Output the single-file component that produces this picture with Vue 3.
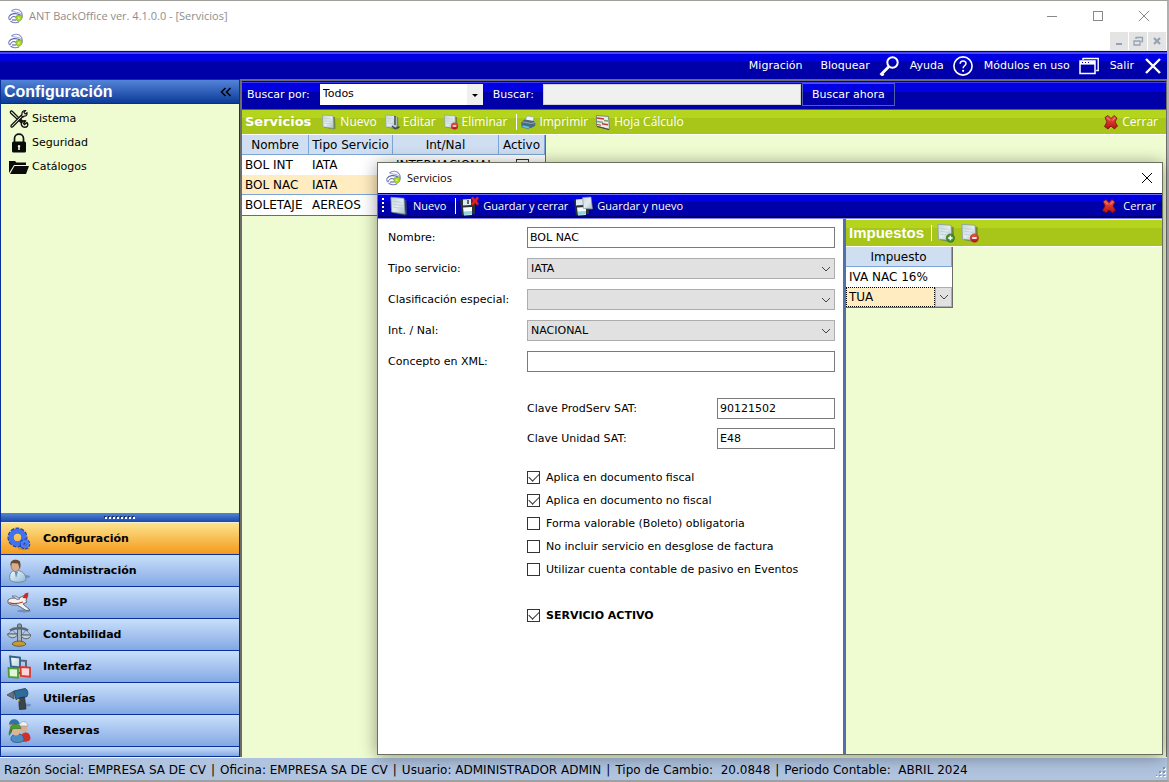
<template>
  <div class="window">
    <svg class="defs" aria-hidden="true">
      <defs>
        <linearGradient id="gPage" x1="0" y1="0" x2="1" y2="1">
          <stop offset="0" stop-color="#c3d3da" />
          <stop offset="0.5" stop-color="#e3ecef" />
          <stop offset="1" stop-color="#a9bcc6" />
        </linearGradient>
        <linearGradient id="gRed" x1="0" y1="0" x2="0" y2="1">
          <stop offset="0" stop-color="#f25a4a" />
          <stop offset="1" stop-color="#b80f0f" />
        </linearGradient>
        <linearGradient id="gShirt" x1="0" y1="0" x2="1" y2="1">
          <stop offset="0" stop-color="#f4fbff" />
          <stop offset="1" stop-color="#8fb9d4" />
        </linearGradient>
        <linearGradient id="gBlueBox" x1="0" y1="0" x2="1" y2="1">
          <stop offset="0" stop-color="#fff" />
          <stop offset="1" stop-color="#b4d0e4" />
        </linearGradient>
      </defs>

      <symbol id="i-logo" viewBox="0 0 16 16">
        <path d="M3.500 3C6 .5 11 .5 13.300 4c1.200 2 1.200 4.500.2 6.500" fill="none" stroke="#8b8fd0" stroke-width="1.100" />
        <path d="M3.500 3C6 4.500 11 3.500 13.500 6.500" fill="none" stroke="#9ea2dc" />
        <path d="M1 8.500C3 5.500 8 4.500 12 7" fill="none" stroke="#5a60b4" stroke-width="1.200" />
        <path d="M1 8.500c-.5 1.500 0 3 1.200 3.600M2.500 13c2 2 6 2 8.500 1" fill="none" stroke="#7c80c8" stroke-width="1.100" />
        <path d="M2.500 11.500c.5-3 4-4 6-1.500M4 12h4.500" fill="none" stroke="#4a4f9e" />
        <path d="M8 8l5.500-1.200c1.300 3 0 6-3 6.700C8.500 12.500 7.500 10.500 8 8z" fill="#a8dc1c" stroke="#6f9c28" stroke-width=".7" />
        <path d="M9.800 9.500h2l-1 2z" fill="#eefbb8" />
      </symbol>

      <symbol id="i-tools" viewBox="0 0 20 20">
        <path d="M2 16.500L12 6.500M3.500 18L14 7.500M2 16.500c-.5 1.500.5 2 1.500 1.500" fill="none" stroke="#111" stroke-width="1.200" />
        <path d="M16.500 1.500c-2.500 0-4 1.500-3.500 4L12 6.500 14 8l1-.8c2 .2 3.500-1.300 3-3.500L16.200 5 15 3.500z" fill="none" stroke="#111" stroke-width="1.200" />
        <path d="M3 2L9.500 8.500M1.500 4L8 10M1.500 4Q1 1.500 3 2" stroke="#111" stroke-width="1.300" fill="none" />
        <path d="M10.500 10.500l3 3" stroke="#111" stroke-width="3.500" />
        <path d="M18 13.500l-2.500 2-1-1 2-2.500c-2.500-1-5 1.500-4 4 .8 2.300 3.500 2.800 5 1.500M18 13.500c1.300 2 .5 4-1 5" fill="none" stroke="#111" stroke-width="1.400" />
      </symbol>
      <symbol id="i-lock" viewBox="0 0 20 20">
        <path d="M5.500 9V5.500a4.500 4.300 0 0 1 9 0V9" fill="none" stroke="#111" stroke-width="1.700" />
        <rect x="3" y="8.500" width="14" height="11" rx="1.500" fill="#0a0a0a" />
        <path d="M10 12a1.300 1.300 0 0 1 .8 2.300V17H9.200v-2.700A1.300 1.300 0 0 1 10 12z" fill="#eefacd" />
      </symbol>
      <symbol id="i-folder" viewBox="0 0 20 20">
        <path d="M0 16V4h6l1.500 1.500H17V8H5z" fill="#0a0a0a" />
        <path d="M5.500 9H20l-3 8H1z" fill="#0a0a0a" />
      </symbol>

      <symbol id="i-page" viewBox="0 0 16 16">
        <path d="M3 13.500l10 2 1.500-1L14 3h-2z" fill="#4c5c50" opacity=".6" />
        <path d="M1.500 1l10.500.8.800 12.600L2 12.800z" fill="url(#gPage)" stroke="#8399a5" stroke-width=".6" />
        <path d="M3.500 4.500l6.500.6M3.500 6.800l7 .6M3.500 9l7 .8" stroke="#b3c6cf" stroke-width=".6" />
      </symbol>
      <symbol id="i-edit" viewBox="0 0 16 16">
        <use href="#i-page" />
        <path d="M11 2v9M8 12l3 2.500 4.500-1.500" fill="none" stroke="#404c50" stroke-width="1.600" />
        <path d="M12.500 3v9" stroke="#a9bcc6" stroke-width="1.200" />
      </symbol>
      <symbol id="i-delete" viewBox="0 0 16 16">
        <use href="#i-page" />
        <circle cx="11.500" cy="12" r="3.300" fill="url(#gRed)" stroke="#b02a2a" stroke-width=".5" />
        <rect x="9.700" y="11.300" width="3.600" height="1.400" fill="#fff" />
      </symbol>
      <symbol id="i-add" viewBox="0 0 16 16">
        <use href="#i-page" />
        <circle cx="11.500" cy="12" r="3.300" fill="#3d9230" stroke="#2b6b22" stroke-width=".5" />
        <path d="M11.500 10.200v3.600M9.700 12h3.600" stroke="#fff" stroke-width="1.200" />
      </symbol>
      <symbol id="i-print" viewBox="0 0 16 16">
        <path d="M5 7l2-5 7 1-1 5z" fill="#eef3f6" stroke="#8fa0a8" stroke-width=".6" />
        <path d="M1 7.500l4-2 9 1.500 1.500 2-.5 3-4 2-9.500-2z" fill="#4b6a80" />
        <path d="M1 7.500l10 2 4.500-1" fill="none" stroke="#9db9c9" stroke-width=".8" />
        <path d="M3 11l7 1.500-1.500 2.500-7-2z" fill="#5ec5ea" stroke="#2d5c78" stroke-width=".5" />
      </symbol>
      <symbol id="i-sheet" viewBox="0 0 16 16">
        <path d="M1.500 1.500l12 1 1 13L1.500 12z" fill="#e9edea" stroke="#697369" stroke-width=".8" />
        <path d="M2 4l7 1M7 9.800l6 1" stroke="#c03a34" stroke-width="1.400" />
        <path d="M2 7.500l6 .8M9 6.500l4 .5" stroke="#76a06a" stroke-width="1.300" />
        <path d="M2 10.500l4 .7" stroke="#c03a34" stroke-width="1" />
        <path d="M2 12.500l12 3" stroke="#444c40" stroke-width="1.200" />
      </symbol>
      <symbol id="i-close" viewBox="0 0 16 16">
        <path d="M2 3.500L5 1.500 8 4.500l3-3L14 4l-2 4 2.500 4-3 3L8 12l-3 3-3.500-2.500L4 8z" fill="url(#gRed)" stroke="#6e0c0c" stroke-width=".8" stroke-linejoin="round" />
        <path d="M4 3.500l3 3M12 3.500L9.500 6.500" stroke="#ff9a88" stroke-width=".8" />
      </symbol>
      <symbol id="i-save-close" viewBox="0 0 20 20">
        <path d="M1 3.500l10-1 5 3V18l-13 1.500z" fill="#2a3238" />
        <path d="M4 3.500l8-.5v6L4 9.500z" fill="#dfe9ee" />
        <path d="M8 4h2v4H8z" fill="#56646c" />
        <path d="M4 11.500l9-.5v8l-8 .5z" fill="#f6fbfc" />
        <path d="M5 15.500l8-.5v3.500l-8 .5z" fill="#8fd6dc" />
        <path d="M12 2l2-1.500L16 3l2-2.500L20 2l-2 3 2 3-2 1.500L16 7l-2 2.500L12 8l2-3z" fill="#e0201c" />
      </symbol>
      <symbol id="i-save-new" viewBox="0 0 20 20">
        <path d="M1 3.500l10-1 5 3V18l-13 1.500z" fill="#2a3238" />
        <path d="M3 3.500l7-.5v6L3 9.500z" fill="#dfe9ee" />
        <path d="M4 11.500l9-.5v8l-8 .5z" fill="#f6fbfc" />
        <path d="M5 15.500l8-.5v3.500l-8 .5z" fill="#8fd6dc" />
        <path d="M9.500 1.500l8.500-.5 1.500 12-9-.5z" fill="url(#gPage)" stroke="#7d8f98" stroke-width=".6" />
      </symbol>

      <symbol id="i-key" viewBox="0 0 20 20">
        <circle cx="13.500" cy="6.500" r="5.200" fill="none" stroke="#fff" stroke-width="2" />
        <path d="M10 10.500L1.500 19M2 17l2.500 2.500" fill="none" stroke="#fff" stroke-width="2.800" />
      </symbol>
      <symbol id="i-help" viewBox="0 0 20 20">
        <circle cx="10" cy="10" r="9.100" fill="none" stroke="#fff" stroke-width="1.600" />
        <path d="M7.200 7.800c0-3.800 5.800-3.600 5.800-.3 0 2.200-2.900 2.300-2.900 4.700" fill="none" stroke="#fff" stroke-width="1.500" />
        <circle cx="10.100" cy="14.800" r="1.100" fill="#fff" />
      </symbol>
      <symbol id="i-windows" viewBox="0 0 20 20">
        <path d="M4 4V2.500h15.200V14.500h-2" fill="none" stroke="#fff" stroke-width="1.400" />
        <rect x="1" y="5" width="15" height="12.500" fill="none" stroke="#fff" stroke-width="1.500" />
        <path d="M1 6.800h15" stroke="#fff" stroke-width="3.600" />
        <path d="M3 6.500h1M6 6.500h1M9 6.500h1" stroke="#0000a8" />
      </symbol>
      <symbol id="i-exit" viewBox="0 0 20 20">
        <path d="M3 3l14 14M17 3L3 17" stroke="#fff" stroke-width="2.400" />
      </symbol>

      <symbol id="i-gears" viewBox="0 0 24 24">
        <ellipse cx="17" cy="21.500" rx="6" ry="1.500" fill="#7a6030" opacity=".4" />
        <circle cx="10.500" cy="10.500" r="7" fill="none" stroke="#1c3fae" stroke-width="6" stroke-dasharray="3 .9" />
        <circle cx="10.500" cy="10.500" r="6.500" fill="none" stroke="#3f72ee" stroke-width="5" />
        <circle cx="18" cy="17" r="3" fill="none" stroke="#1c3fae" stroke-width="4.600" stroke-dasharray="2 .6" />
        <circle cx="18" cy="17" r="3" fill="none" stroke="#4a7cf2" stroke-width="2.800" />
      </symbol>
      <symbol id="i-person" viewBox="0 0 24 24">
        <ellipse cx="18" cy="17.500" rx="5" ry="1.500" fill="#4b6a98" opacity=".5" />
        <path d="M3 21c-1-6 1-9.500 6-9.500 6 0 10 3 10 9.500-3 3-13 3-16 0z" fill="url(#gShirt)" stroke="#5d7f96" stroke-width=".8" />
        <path d="M7.500 12l1.500 7 2-6z" fill="#5f94b8" />
        <ellipse cx="8.500" cy="7" rx="4.300" ry="5.500" fill="#d9ad8c" stroke="#7a5a44" stroke-width=".6" />
        <path d="M3.500 7C2.500 0 9-.5 12.500 2c1.500 2 1 5 .5 8L11 4.500 5 4z" fill="#6a4a34" />
      </symbol>
      <symbol id="i-plane" viewBox="0 0 24 24">
        <ellipse cx="17" cy="20" rx="7" ry="1.500" fill="#4b6a98" opacity=".5" />
        <path d="M1 9c3-2.500 7-2 10-1.500L18 4l3-.5-2 6 1 1.500-4 2 7 6-4 .5-9-5.500c-4 .5-7 0-9-2z" fill="#f0f2f4" stroke="#5f686e" stroke-width="1" />
        <path d="M5 5l4 0 4 3-3 .5z" fill="#c9d0d4" stroke="#5f686e" stroke-width=".7" />
        <path d="M15.500 7l2.500-4.500 3.500-1-1.500 6z" fill="#d82420" />
        <path d="M2 11.500c4 2 8 1.500 14-.5" fill="none" stroke="#c8322c" stroke-width="1.200" />
      </symbol>
      <symbol id="i-scale" viewBox="0 0 24 24">
        <path d="M10.500 3h4v17h-4z" fill="#a8b4bc" stroke="#4c565c" stroke-width=".9" />
        <circle cx="12.500" cy="3" r="2.200" fill="#8b979e" stroke="#4c565c" stroke-width=".9" />
        <path d="M3 7.500c4-3 14-3 18 0" fill="none" stroke="#5d686f" stroke-width="2.400" />
        <path d="M5 7l-4 4h9zM19 7l-4 5h9z" fill="none" stroke="#69757c" stroke-width=".7" />
        <path d="M.5 11h10c-1 5-9 5-10 0zM14 12h10c-1 5-9 5-10 0z" fill="#c4ced3" stroke="#4c565c" stroke-width=".9" />
        <path d="M5 21c2-4 12-4 14 0-2 3-12 3-14 0z" fill="#c99a34" stroke="#5c4a20" stroke-width=".8" />
      </symbol>
      <symbol id="i-boxes" viewBox="0 0 24 24">
        <path d="M13 5.500l6 .5v7M6 12v4M11 18h4" fill="none" stroke="#586878" stroke-width="2" />
        <path d="M3 1.500l10 1v10l-9-1z" fill="url(#gBlueBox)" stroke="#2f628c" stroke-width="1.800" />
        <path d="M1.500 13l9.500.7v9l-9-.7z" fill="#e4f4dc" stroke="#4d9c32" stroke-width="1.800" />
        <path d="M13.500 12l9.500.7v9l-9-.7z" fill="#fbd8d4" stroke="#d83838" stroke-width="1.800" />
      </symbol>
      <symbol id="i-drill" viewBox="0 0 24 24">
        <ellipse cx="19" cy="18" rx="5" ry="1.500" fill="#4b6a98" opacity=".5" />
        <path d="M0 8l7-4v8z" fill="#68727a" stroke="#3a4248" stroke-width=".7" />
        <path d="M7 4L18 1.500c3 1 3.500 5 2 8L9 12.500z" fill="#2f6c9c" stroke="#24435c" stroke-width=".9" />
        <path d="M12 11l5.500-1 1 8 .5 4-6.500.5-.5-5z" fill="#3a444c" stroke="#20282e" stroke-width=".7" />
        <path d="M10 12h2.500v2.500L10.500 14z" fill="#d8b040" />
      </symbol>
      <symbol id="i-people" viewBox="0 0 24 24">
        <path d="M13 21c0-9 10-10 10.500-2 .5 4-8 5-10.500 2z" fill="#d0302c" />
        <ellipse cx="16.500" cy="9" rx="4" ry="4.500" fill="#d9ad8c" />
        <path d="M12.500 7c0-6 8-6 8.500 0z" fill="#eef0f2" stroke="#8a9298" stroke-width=".6" />
        <path d="M2 17c-1-5 1-8 5-7z" fill="#3d7c3c" />
        <ellipse cx="7" cy="6" rx="4.500" ry="5" fill="#c99b7c" />
        <path d="M2 5.500c0-7 10-7 10.500-.5z" fill="#2f74a8" />
        <path d="M4 21c-1-8 13-9 13 0-2 3.500-11 3.500-13 0z" fill="#4c8cc0" stroke="#24547c" stroke-width=".7" />
        <ellipse cx="9" cy="12" rx="4" ry="4.500" fill="#e0b492" />
        <path d="M3 11.500c0-8 10-8 11-2L7 9.500z" fill="#46a030" stroke="#2b6b22" stroke-width=".6" />
      </symbol>
    </svg>

    <header class="titlebar">
      <svg class="icon"><use href="#i-logo" /></svg>
      <span class="title">ANT BackOffice ver. 4.1.0.0 - [Servicios]</span>
      <div class="win-buttons">
        <button aria-label="Minimizar"><svg viewBox="0 0 12 12"><path d="M1 6.500h10" /></svg></button>
        <button aria-label="Maximizar"><svg viewBox="0 0 12 12"><rect x="1.500" y="1.500" width="9" height="9" /></svg></button>
        <button aria-label="Cerrar"><svg viewBox="0 0 12 12"><path d="M1 1l10 10M11 1L1 11" /></svg></button>
      </div>
    </header>

    <div class="mdi-bar">
      <svg class="icon"><use href="#i-logo" /></svg>
      <div class="mdi-buttons">
        <button aria-label="Minimizar ventana"><svg viewBox="0 0 12 12"><path d="M3 9h6" stroke-width="2" /></svg></button>
        <button aria-label="Restaurar ventana"><svg viewBox="0 0 12 12"><path d="M4 4V2.500h6.500v4H9M4 2.500h6.500M2 6h6v4H2z" stroke-width="1.300" /></svg></button>
        <button aria-label="Cerrar ventana"><svg viewBox="0 0 12 12"><path d="M3 3l6 6M9 3L3 9" stroke-width="2.200" /></svg></button>
      </div>
    </div>

    <nav class="top-menu">
      <button v-for="item in topMenu" :key="item.label">
        {{ item.label }}
        <svg v-if="item.icon"><use :href="'#' + item.icon" /></svg>
      </button>
    </nav>

    <div class="workspace">
      <aside class="sidebar">
        <div class="sidebar-header">
          <h2>Configuración</h2>
          <button aria-label="Contraer">
            <svg viewBox="0 0 12 10"><path d="M5.500 1l-4 4 4 4M10.500 1l-4 4 4 4" /></svg>
          </button>
        </div>
        <ul class="tree">
          <li v-for="item in treeItems" :key="item.label">
            <a href="#"><svg><use :href="'#' + item.icon" /></svg>{{ item.label }}</a>
          </li>
        </ul>
        <div class="splitter"><i v-for="n in 8" :key="n"></i></div>
        <button
          v-for="item in modules"
          :key="item.label"
          class="module"
          :class="{ active: item.label === activeModule }"
          @click="activeModule = item.label"
        >
          <svg><use :href="'#' + item.icon" /></svg>
          {{ item.label }}
        </button>
        <div class="module-overflow"></div>
      </aside>

      <main class="content">
        <div class="search-bar">
          <label for="buscar-por">Buscar por:</label>
          <div class="search-select">
            <select id="buscar-por" v-model="searchBy">
              <option>Todos</option>
            </select>
            <svg viewBox="0 0 8 5"><path d="M1 1h6L4 4z" /></svg>
          </div>
          <label for="buscar" class="search-label">Buscar:</label>
          <input id="buscar" v-model="searchText" type="text">
          <button>Buscar ahora</button>
        </div>

        <div class="green-bar">
          <h3>Servicios</h3>
          <button class="tool"><svg><use href="#i-page" /></svg>Nuevo</button>
          <button class="tool"><svg><use href="#i-edit" /></svg>Editar</button>
          <button class="tool"><svg><use href="#i-delete" /></svg>Eliminar</button>
          <span class="separator"></span>
          <button class="tool print"><svg><use href="#i-print" /></svg>Imprimir</button>
          <button class="tool"><svg><use href="#i-sheet" /></svg>Hoja Cálculo</button>
          <button class="tool close"><svg><use href="#i-close" /></svg>Cerrar</button>
        </div>

        <table class="grid services">
          <thead>
            <tr><th>Nombre</th><th>Tipo Servicio</th><th>Int/Nal</th><th>Activo</th></tr>
          </thead>
          <tbody>
            <tr v-for="row in services" :key="row.name" :class="{ selected: row.name === form.name }">
              <td>{{ row.name }}</td>
              <td>{{ row.type }}</td>
              <td>{{ row.scope }}</td>
              <td class="check-cell"><input v-model="row.active" type="checkbox" :aria-label="row.name"></td>
            </tr>
          </tbody>
        </table>
      </main>
    </div>

    <footer class="status">
      <span>Razón Social: EMPRESA SA DE CV</span>
      <span>|</span>
      <span>Oficina: EMPRESA SA DE CV</span>
      <span>|</span>
      <span>Usuario: ADMINISTRADOR ADMIN</span>
      <span>|</span>
      <span>Tipo de Cambio:&nbsp; 20.0848</span>
      <span>|</span>
      <span>Periodo Contable:&nbsp; ABRIL 2024</span>
      <svg class="grip" viewBox="0 0 10 10">
        <path d="M8 1h2v2H8zM4 5h2v2H4zM8 5h2v2H8zM0 9h2v1H0zM4 9h2v1H4zM8 9h2v1H8z" fill="#fff" />
        <path d="M7 0h2v2H7zM3 4h2v2H3zM7 4h2v2H7zM0 8h1v1H0zM3 8h2v1H3zM7 8h2v1H7z" fill="#8c9099" />
      </svg>
    </footer>

    <section class="dialog" role="dialog" aria-labelledby="dialog-title">
      <div class="dialog-title">
        <svg class="icon"><use href="#i-logo" /></svg>
        <span id="dialog-title">Servicios</span>
        <button aria-label="Cerrar"><svg viewBox="0 0 12 12"><path d="M1 1l10 10M11 1L1 11" /></svg></button>
      </div>

      <div class="dialog-bar">
        <span class="handle"></span>
        <button class="tool"><svg><use href="#i-page" /></svg>Nuevo</button>
        <span class="separator"></span>
        <button class="tool save"><svg><use href="#i-save-close" /></svg>Guardar y cerrar</button>
        <button class="tool"><svg><use href="#i-save-new" /></svg>Guardar y nuevo</button>
        <button class="tool close"><svg><use href="#i-close" /></svg>Cerrar</button>
      </div>

      <div class="dialog-body">
        <form class="form" @submit.prevent>
          <div class="fields">
            <label for="nombre">Nombre:</label>
            <input id="nombre" v-model="form.name" type="text">

            <template v-for="field in selects" :key="field.id">
              <label :for="field.id">{{ field.label }}</label>
              <div class="select">
                <select :id="field.id" v-model="field.value">
                  <option>{{ field.value }}</option>
                </select>
                <svg viewBox="0 0 10 6"><path d="M1 1l4 4 4-4" /></svg>
              </div>
            </template>

            <label for="concepto">Concepto en XML:</label>
            <input id="concepto" v-model="form.concept" type="text">
          </div>

          <div class="sat">
            <label for="prodserv">Clave ProdServ SAT:</label>
            <input id="prodserv" v-model="form.productKey" type="text">
            <label for="unidad">Clave Unidad SAT:</label>
            <input id="unidad" v-model="form.unitKey" type="text">
          </div>

          <div class="options">
            <label v-for="option in options" :key="option.label">
              <input v-model="option.checked" type="checkbox">{{ option.label }}
            </label>
          </div>

          <label class="active-service">
            <input v-model="form.active" type="checkbox">SERVICIO ACTIVO
          </label>
        </form>

        <div class="taxes">
          <div class="green-bar taxes-bar">
            <h3>Impuestos</h3>
            <span class="separator"></span>
            <button class="tool" aria-label="Agregar impuesto"><svg><use href="#i-add" /></svg></button>
            <button class="tool" aria-label="Quitar impuesto"><svg><use href="#i-delete" /></svg></button>
          </div>
          <table class="grid tax-grid">
            <thead>
              <tr><th>Impuesto</th></tr>
            </thead>
            <tbody>
              <tr><td>IVA NAC 16%</td></tr>
              <tr>
                <td class="tax-cell">
                  <div class="tax-select">
                    <select v-model="tax" aria-label="Impuesto">
                      <option>TUA</option>
                    </select>
                    <span class="arrow"><svg viewBox="0 0 10 6"><path d="M1 1l4 4 4-4" /></svg></span>
                  </div>
                </td>
              </tr>
            </tbody>
          </table>
        </div>
      </div>
    </section>
  </div>
</template>

<script setup>
import { reactive, ref } from 'vue'

const topMenu = [
  { label: 'Migración' },
  { label: 'Bloquear', icon: 'i-key' },
  { label: 'Ayuda', icon: 'i-help' },
  { label: 'Módulos en uso', icon: 'i-windows' },
  { label: 'Salir', icon: 'i-exit' }
]

const treeItems = [
  { label: 'Sistema', icon: 'i-tools' },
  { label: 'Seguridad', icon: 'i-lock' },
  { label: 'Catálogos', icon: 'i-folder' }
]

const modules = [
  { label: 'Configuración', icon: 'i-gears' },
  { label: 'Administración', icon: 'i-person' },
  { label: 'BSP', icon: 'i-plane' },
  { label: 'Contabilidad', icon: 'i-scale' },
  { label: 'Interfaz', icon: 'i-boxes' },
  { label: 'Utilerías', icon: 'i-drill' },
  { label: 'Reservas', icon: 'i-people' }
]
const activeModule = ref('Configuración')

const searchBy = ref('Todos')
const searchText = ref('')
const tax = ref('TUA')

const services = reactive([
  { name: 'BOL INT', type: 'IATA', scope: 'INTERNACIONAL', active: true },
  { name: 'BOL NAC', type: 'IATA', scope: '', active: true },
  { name: 'BOLETAJE', type: 'AEREOS', scope: '', active: true }
])

const form = reactive({
  name: 'BOL NAC',
  concept: '',
  productKey: '90121502',
  unitKey: 'E48',
  active: true
})

const selects = reactive([
  { id: 'tipo', label: 'Tipo servicio:', value: 'IATA' },
  { id: 'clasificacion', label: 'Clasificación especial:', value: '' },
  { id: 'int-nal', label: 'Int. / Nal:', value: 'NACIONAL' }
])

const options = reactive([
  { label: 'Aplica en documento fiscal', checked: true },
  { label: 'Aplica en documento no fiscal', checked: true },
  { label: 'Forma valorable (Boleto) obligatoria', checked: false },
  { label: 'No incluir servicio en desglose de factura', checked: false },
  { label: 'Utilizar cuenta contable de pasivo en Eventos', checked: false }
])
</script>

<style>
body {
  background: #c4c4c4;
}
</style>

<style scoped>
* {
  box-sizing: border-box;
}

.window {
  position: relative;
  display: flex;
  flex-direction: column;
  min-height: 100vh;
  border-top: 1px solid #a0a09a;
  border-right: 2px solid #b0b0b0;
  border-bottom: 2px solid #a0a0a0;
  background: #fff;
  color: #000;
  font: 11px/14px "DejaVu Sans", sans-serif;
}

.defs {
  position: absolute;
  width: 0;
  height: 0;
}

button,
input,
select {
  margin: 0;
  padding: 0;
  border: 0;
  border-radius: 0;
  background: none;
  color: inherit;
  font: inherit;
  white-space: nowrap;
}

select {
  appearance: none;
}

svg {
  flex: none;
}

h2,
h3 {
  margin: 0;
}

.icon {
  width: 16px;
  height: 16px;
}

.titlebar {
  display: flex;
  align-items: center;
  height: 30px;
  padding-left: 8px;
  color: #8e8e8e;
}

.title {
  margin-left: 5px;
  font: 11px/14px "Open Sans", sans-serif;
}

.win-buttons {
  display: flex;
  margin-left: auto;
}

.win-buttons button {
  width: 46px;
  height: 30px;
}

.win-buttons svg {
  width: 12px;
  height: 12px;
  vertical-align: middle;
  fill: none;
  stroke: #888;
}

.mdi-bar {
  display: flex;
  align-items: center;
  height: 20px;
  padding: 0 1px 0 8px;
  border-bottom: 1px solid #e8e8e8;
}

.mdi-buttons {
  display: flex;
  gap: 1px;
  margin-left: auto;
}

.mdi-buttons button {
  width: 18px;
  height: 18px;
  background: #e4e4e4;
}

.mdi-buttons svg {
  width: 12px;
  height: 12px;
  vertical-align: middle;
  fill: none;
  stroke: #94a3b3;
}

.top-menu {
  display: flex;
  justify-content: flex-end;
  align-items: center;
  gap: 11px;
  height: 28px;
  padding-right: 4px;
  border-top: 1px solid #000088;
  background: linear-gradient(#4848f0 0 2px, #0000e0 2px 9px, #0000a8 9px);
  color: #fff;
}

.top-menu button {
  display: flex;
  align-items: center;
  gap: 9px;
}

.top-menu button:first-child {
  margin-right: 7px;
}

.top-menu svg {
  width: 20px;
  height: 20px;
}

.workspace {
  display: flex;
  flex: 1;
}

.sidebar {
  display: flex;
  flex-direction: column;
  width: 240px;
  border: 1px solid #0a2f98;
  background: #effbd0;
}

.sidebar-header {
  display: flex;
  justify-content: space-between;
  align-items: center;
  height: 24px;
  padding: 1px 7px 0 3px;
  border-bottom: 1px solid #0a2f78;
  background: linear-gradient(#5384d8, #0c3b98);
}

.sidebar-header h2 {
  color: #fff;
  font: bold 16px/20px "Liberation Sans", sans-serif;
}

.sidebar-header svg {
  display: block;
  width: 12px;
  height: 10px;
  fill: none;
  stroke: #000;
  stroke-width: 1.5;
}

.tree {
  flex: 1;
  margin: 0;
  padding: 3px 8px;
  list-style: none;
}

.tree a {
  display: flex;
  align-items: center;
  gap: 3px;
  height: 24px;
  color: #000;
  text-decoration: none;
}

.tree svg {
  width: 20px;
  height: 20px;
}

.splitter {
  display: flex;
  justify-content: center;
  align-items: center;
  gap: 2px;
  height: 10px;
  border-bottom: 1px solid #f4f0d8;
  background: linear-gradient(#5384d8, #1a48a8);
}

.splitter i {
  width: 2px;
  height: 2px;
  background: #fff;
  box-shadow: -1px -1px #1f3050;
}

.module {
  display: flex;
  align-items: center;
  gap: 12px;
  height: 32px;
  padding: 1px 0 0 6px;
  border-bottom: 1px solid #0830a0;
  background: linear-gradient(#c9e0fd, #83a8e1);
  font-weight: bold;
}

.module.active {
  background: linear-gradient(#fce38c, #f49a1c);
}

.module svg {
  width: 24px;
  height: 24px;
}

.module-overflow {
  height: 9px;
  background: linear-gradient(#c9e0fd, #83a8e1);
}

.content {
  flex: 1;
  border: solid #6c6c6c;
  border-width: 2px 1px 0 2px;
  background: #effbd0;
}

.search-bar {
  display: flex;
  align-items: center;
  height: 29px;
  padding: 0 0 2px 5px;
  border-bottom: 1px solid #5c5c6c;
  background: linear-gradient(#0000a0 0 1px, #3c3cf0 1px 2px, #0000e0 2px 11px, #0000a8 11px);
  color: #fff;
}

.search-bar label {
  padding-top: 2px;
}

.search-select {
  position: relative;
  margin-left: 10px;
}

.search-select select {
  display: block;
  width: 163px;
  height: 21px;
  padding-left: 3px;
  background: linear-gradient(to left, #f0f0f0 16px, #fff 16px);
  color: #000;
}

.search-select svg {
  position: absolute;
  top: 9px;
  right: 4px;
  width: 8px;
  height: 5px;
}

.search-label {
  margin: 0 9px 0 10px;
}

.search-bar input {
  width: 258px;
  height: 21px;
  border: 1px solid #d0d0d0;
  background: #f0f0f0;
  color: #000;
}

.search-bar button {
  width: 93px;
  height: 23px;
  margin-left: 1px;
  padding-top: 2px;
  border: 1px solid #5060a8;
}

.green-bar {
  display: flex;
  align-items: center;
  height: 25px;
  padding: 0 8px 1px 3px;
  border-bottom: 1px solid #fff;
  background: linear-gradient(#b4d41e 0 8px, #a8c61a 8px);
  color: #fff;
}

.green-bar h3 {
  margin-right: 3px;
  font: bold 13px/18px "DejaVu Sans", sans-serif;
}

.tool {
  display: flex;
  align-items: center;
  gap: 3px;
  margin-left: 7px;
  font: 12px/16px "Open Sans", sans-serif;
}

.tool svg {
  width: 16px;
  height: 16px;
}

.tool.close {
  margin-left: auto;
}

.separator {
  width: 1px;
  height: 16px;
  margin-left: 9px;
  background: #fff;
}

.tool.print {
  margin-left: 3px;
}

.grid {
  border-collapse: separate;
  border-spacing: 0;
  border: solid #6c6c6c;
  border-width: 0 1px 1px 0;
  background: #fff;
  font-size: 12px;
  table-layout: fixed;
}

.grid th {
  height: 20px;
  padding: 0;
  border-right: 1px solid #7ca4d8;
  border-bottom: 1px solid #7ca4d8;
  background: #cfdef0;
  font-weight: normal;
  text-align: center;
}

.grid td {
  height: 20px;
  padding: 0 3px;
  white-space: nowrap;
}

.grid tr.selected td {
  border-bottom: 1px solid #7ca4d8;
  background: #ffecc0;
}

.services {
  width: 304px;
}

.services th:nth-child(1) {
  width: 67px;
}

.services th:nth-child(2) {
  width: 84px;
}

.services th:nth-child(3) {
  width: 106px;
}

.grid .check-cell {
  padding: 0;
  text-align: center;
}

input[type="checkbox"] {
  appearance: none;
  position: relative;
  flex: none;
  width: 13px;
  height: 13px;
  border: 1px solid #333;
  background: #fff;
  vertical-align: middle;
}

input[type="checkbox"]:checked::after {
  content: "";
  position: absolute;
  top: 1px;
  left: 1px;
  width: 9px;
  height: 5px;
  border: solid #333;
  border-width: 0 0 1px 1px;
  transform: rotate(-45deg);
}

.status {
  display: flex;
  align-items: center;
  gap: 5px;
  height: 23px;
  padding: 2px 0 0 4px;
  border-top: 1px solid #f4f4f4;
  background: #b0c4e0;
  font-size: 12px;
  white-space: nowrap;
}

.grip {
  align-self: flex-end;
  width: 10px;
  height: 10px;
  margin: 0 1px 3px auto;
}

/* Ventana flotante sobre el área de trabajo */
.dialog {
  position: absolute;
  top: 161px;
  right: 4px;
  bottom: 25px;
  left: 377px;
  display: flex;
  flex-direction: column;
  border: 1px solid #6a7060;
  background: #fff;
  box-shadow: 0 2px 16px rgba(0, 0, 0, 0.4);
}

.dialog-title {
  display: flex;
  align-items: center;
  height: 30px;
  padding: 0 9px 1px 8px;
  font: 11px/14px "Open Sans", sans-serif;
}

.dialog-title span {
  margin-left: 5px;
}

.dialog-title button {
  width: 12px;
  height: 12px;
  margin-left: auto;
}

.dialog-title button svg {
  display: block;
  width: 12px;
  height: 12px;
  stroke: #000;
}

.dialog-bar {
  display: flex;
  align-items: center;
  height: 26px;
  padding: 0 6px 0 4px;
  border-top: 1px solid #000070;
  border-bottom: 1px solid #8080f0;
  background: linear-gradient(#7070f8 0 1px, #0000e0 1px 7px, #0000a8 7px 22px, #000070 22px);
  color: #fff;
}

.dialog-bar .tool {
  gap: 4px;
  margin-left: 5px;
  font-size: 11px;
}

.dialog-bar .tool svg {
  width: 20px;
  height: 20px;
}

.dialog-bar .tool.save {
  margin-left: 3px;
}

.dialog-bar .tool.close {
  gap: 6px;
  margin-left: auto;
}

.dialog-bar .tool.close svg {
  width: 16px;
  height: 16px;
}

.handle {
  width: 2px;
  height: 16px;
  background: repeating-linear-gradient(#fff 0 2px, transparent 2px 4px);
}

.dialog-body {
  display: flex;
  flex: 1;
}

.form {
  display: flex;
  flex-direction: column;
  width: 465px;
  padding: 8px 8px 0 10px;
}

.fields {
  display: grid;
  grid-template-columns: 139px 1fr;
  align-items: center;
  row-gap: 10px;
}

.form input[type="text"] {
  width: 100%;
  height: 21px;
  padding-left: 2px;
  border: 1px solid #7a7a7a;
  background: #fff;
}

.select {
  position: relative;
}

.select select {
  display: block;
  width: 100%;
  height: 21px;
  padding-left: 3px;
  border: 1px solid #adadad;
  background: #e1e1e1;
}

.select svg {
  position: absolute;
  top: 8px;
  right: 4px;
  width: 10px;
  height: 6px;
  fill: none;
  stroke: #444;
}

.sat {
  display: grid;
  grid-template-columns: 190px 1fr;
  align-items: center;
  row-gap: 9px;
  margin: 26px 0 0 139px;
}

.options {
  display: flex;
  flex-direction: column;
  gap: 9px;
  margin: 22px 0 0 139px;
}

.options label,
.active-service {
  display: flex;
  align-items: flex-start;
  gap: 6px;
}

.active-service {
  margin: 32px 0 0 139px;
  font-weight: bold;
}

.taxes {
  flex: 1;
  border-left: 3px solid #5470a8;
  background: #effbd0;
}

.taxes-bar {
  height: 27px;
  margin-top: 1px;
}

.taxes-bar h3 {
  margin: 0;
  font: bold 15px/18px "Liberation Sans", sans-serif;
}

.taxes-bar .separator {
  margin-left: 7px;
}

.taxes-bar .tool {
  margin-left: 4px;
}

.taxes-bar .tool svg {
  width: 20px;
  height: 20px;
}

.tax-grid {
  width: 107px;
}

.grid .tax-cell {
  padding: 0;
}

.tax-select {
  display: flex;
  height: 20px;
}

.tax-select select {
  flex: 1;
  min-width: 0;
  padding-left: 2px;
  border: 1px dotted #000;
  background: #ffecc0;
}

.arrow {
  display: flex;
  justify-content: center;
  align-items: center;
  width: 17px;
  border: 1px solid #adadad;
  background: #e1e1e1;
  pointer-events: none;
}

.arrow svg {
  width: 10px;
  height: 6px;
  fill: none;
  stroke: #444;
}
</style>
